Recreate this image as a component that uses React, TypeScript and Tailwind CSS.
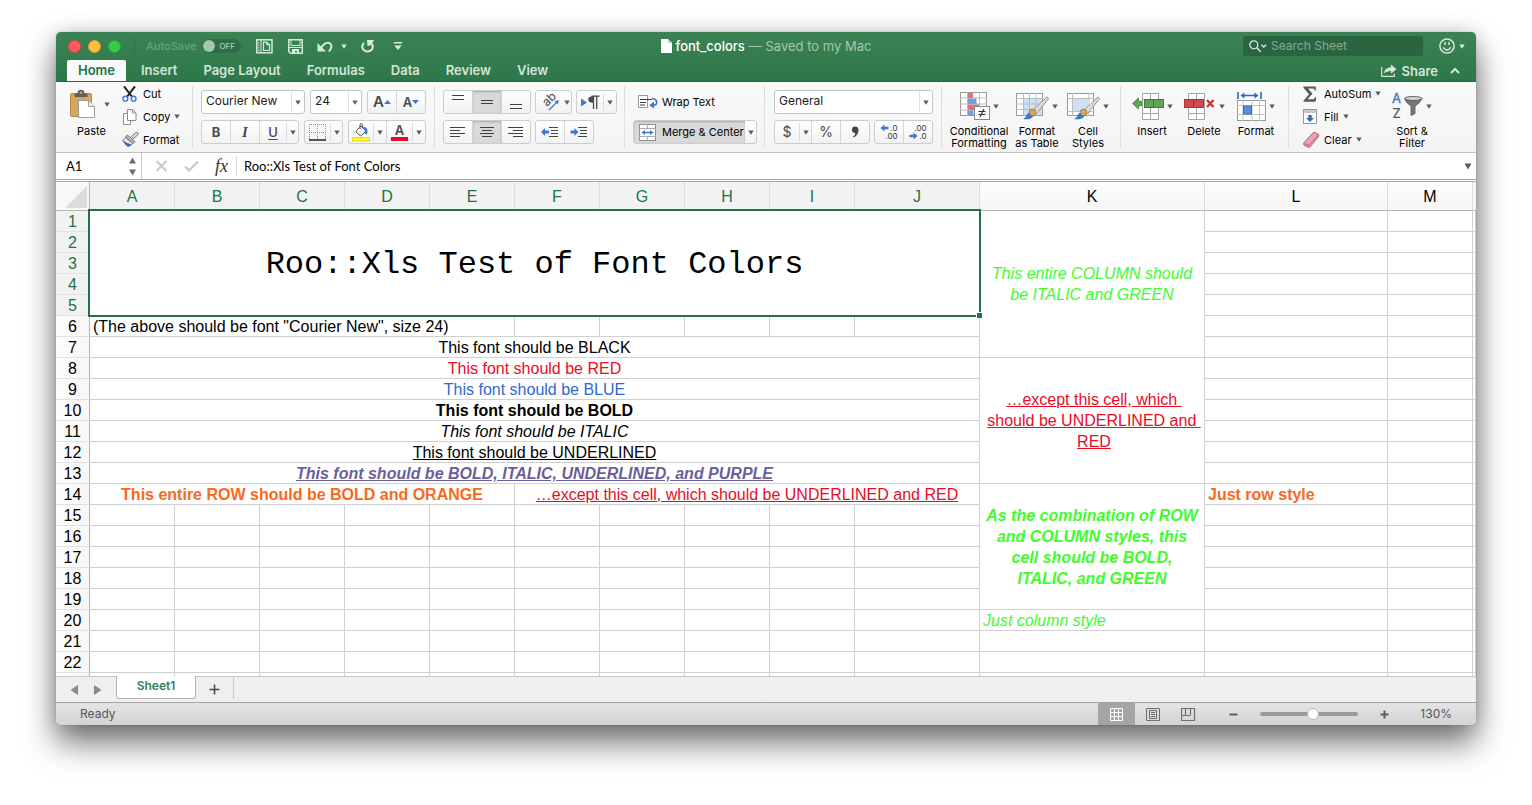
import React, { type ReactNode } from "react";

type Kids = { children?: ReactNode };

/* ---------- small shared pieces ---------- */

function Caret({ className = "text-[#5c5c5c]" }: { className?: string }) {
  return (
    <svg width="6" height="5" viewBox="0 0 6 5" className={"shrink-0 " + className} aria-hidden="true">
      <path d="M0.3 0.4h5.4L3 4.8z" fill="currentColor" />
    </svg>
  );
}

function Group({ children, className = "" }: Kids & { className?: string }) {
  return <div className={"flex shrink-0 border-r border-[#dfdfdf] h-[62px] " + className}>{children}</div>;
}

function Box({ children, className = "" }: Kids & { className?: string }) {
  return (
    <div
      className={
        "flex h-6 overflow-hidden rounded-[3px] border border-[#cdcdcd] bg-linear-to-b from-white to-[#f2f2f2] " + className
      }
    >
      {children}
    </div>
  );
}

function Tool({ label, children, className = "w-7", on = false }: Kids & { label: string; className?: string; on?: boolean }) {
  return (
    <button
      type="button"
      aria-label={label}
      className={
        "flex h-full shrink-0 items-center justify-center text-[#4a4a4a] " + (on ? "bg-[#d9d9d9] shadow-[inset_0_1px_2px_#a8a8a8] " : "") + className
      }
    >
      {children}
    </button>
  );
}

const Line = () => <span className="h-full w-px shrink-0 bg-[#d6d6d6]" />;
const Inner = () => <span className="my-[2px] w-px shrink-0 bg-[#dcdcdc]" />;

function Combo({ label, value, className }: { label: string; value: string; className: string }) {
  return (
    <div className={"relative h-6 " + className}>
      <select
        aria-label={label}
        defaultValue={value}
        className="block h-6 w-full appearance-none rounded-[3px] border border-[#c4c4c4] bg-white pb-[2px] pl-1 font-['Inter',sans-serif] text-[12px] leading-4 text-[#1c1c1c]"
      >
        <option>{value}</option>
      </select>
      <span className="pointer-events-none absolute inset-y-[2px] right-1 flex items-center border-l border-[#e0e0e0] pl-[3px]">
        <Caret />
      </span>
    </div>
  );
}

function Lines({ rows }: { rows: [number, number, number][] }) {
  return (
    <svg width="16" height="16" viewBox="0 0 16 16" aria-hidden="true">
      {rows.map(([x, y, w]) => (
        <rect key={y} x={x} y={y} width={w} height="1" fill="#3f3f3f" />
      ))}
    </svg>
  );
}

function BigTool({ icon, lines, className }: { icon: ReactNode; lines: string[]; className: string }) {
  return (
    <button type="button" className={"flex shrink-0 flex-col items-center pt-[6px] text-[11px] leading-3 text-black " + className}>
      <span className="mb-[5px] flex h-7 items-center gap-[3px]">
        {icon}
        <Caret />
      </span>
      {lines.map((l) => (
        <span key={l} className="whitespace-nowrap">
          {l}
        </span>
      ))}
    </button>
  );
}

function SmallTool({ icon, text, caret = false }: { icon: ReactNode; text: string; caret?: boolean }) {
  return (
    <button type="button" className="flex h-[23px] shrink-0 items-center text-[11px] leading-4 text-black">
      <span className="flex w-[21px] shrink-0 items-center">{icon}</span>
      <span className="mr-1 whitespace-nowrap">{text}</span>
      {caret && <Caret />}
    </button>
  );
}

/* ---------- ribbon icons ---------- */

const PasteIcon = () => (
  <svg width="26" height="30" viewBox="0 0 26 30" aria-hidden="true">
    <rect x="0.500" y="4.500" width="21" height="23" rx="1.500" fill="#d9a556" stroke="#b98842" />
    <path d="M4.500 8V5.500q0-1.300 1.300-1.300H7.500q0-3.400 3.500-3.400t3.500 3.400h1.700q1.300 0 1.300 1.300V8z" fill="#5d6065" />
    <circle cx="11" cy="3.800" r="1.300" fill="#d9a556" />
    <path d="M8.500 11.500h10l6 6v11h-16z" fill="#fff" stroke="#9c9c9c" />
    <path d="M18.500 11.500v6h6" fill="#eee" stroke="#9c9c9c" />
  </svg>
);

const CutIcon = () => (
  <svg width="15" height="16" viewBox="0 0 15 16" aria-hidden="true">
    <path d="M2 0.300L9.800 10.500M13 0.300L5.200 10.500" stroke="#222" strokeWidth="2" />
    <circle cx="3.400" cy="12.700" r="2.400" fill="none" stroke="#3c78d0" strokeWidth="1.400" />
    <circle cx="11.600" cy="12.700" r="2.400" fill="none" stroke="#3c78d0" strokeWidth="1.400" />
  </svg>
);

const CopyIcon = () => (
  <svg width="15" height="16" viewBox="0 0 15 16" aria-hidden="true">
    <path d="M1.500 4.500h7v11h-7z" fill="#fff" stroke="#8c8c8c" />
    <path d="M5.500 0.500h5l3.500 3.500v7.500h-8.500z" fill="#fff" stroke="#8c8c8c" />
    <path d="M10.500 0.500v3.500h3.500" fill="none" stroke="#8c8c8c" />
  </svg>
);

const PainterIcon = () => (
  <svg width="17" height="15" viewBox="0 0 17 15" aria-hidden="true">
    <path d="M9.500 4.500L13.500 0.800Q15 0 15.800 1T15.600 3L11.500 6.500z" fill="#ddd" stroke="#666" strokeWidth="0.900" />
    <path d="M5.500 3L13 9.500L11 11.500L3.500 5z" fill="#b9b9b9" stroke="#666" strokeWidth="0.900" />
    <path d="M3.500 5.500L10.700 11.700Q9 14 6 14.500Q2.500 12 0.500 8.200Q2.500 7.800 3.500 5.500z" fill="#e4e4e4" stroke="#777" strokeWidth="0.800" />
    <path d="M0.800 8.500Q4 11 9.600 12.600Q8 14.500 5.700 14.500Q2.500 12.500 0.800 8.500z" fill="#2f68bb" />
  </svg>
);

const BorderIcon = () => (
  <svg width="18" height="17" viewBox="0 0 18 17" aria-hidden="true">
    <path d="M0.500 0v15M8.500 0v15M16.500 0v15M0 0.500h17M0 8.500h17" stroke="#8b8b8b" strokeDasharray="1 1" fill="none" />
    <path d="M0 16h17" stroke="#222" strokeWidth="1.400" />
  </svg>
);

const FillColorIcon = () => (
  <svg width="19" height="19" viewBox="0 0 19 19" aria-hidden="true">
    <path d="M4.500 7.500L9 3l5 5-4.500 4.500q-0.700 0.700-1.400 0L4 9z" fill="#f4f4f4" stroke="#555" />
    <path d="M8 6V2q0-1.500 1.200-1.500T10.400 2v3" fill="none" stroke="#555" />
    <path d="M11 3.500q4.500 0.500 4.500 5 0 3-1.800 2.700T13.200 8z" fill="#3c78d0" />
    <rect x="0.500" y="14.500" width="17" height="3.500" fill="#ffff22" stroke="#dede26" />
  </svg>
);

const WrapIcon = () => (
  <svg width="20" height="14" viewBox="0 0 20 14" aria-hidden="true">
    <path d="M9.500 0.500h-9v12h9z" fill="#fff" stroke="#999" />
    <path d="M2 4.500h12M2 7.500h6M2 10h5" stroke="#3e3e3e" fill="none" />
    <path d="M14 3.500q4.700 0.300 4.700 4 0 2.600-3.200 2.800" fill="none" stroke="#3c78d0" strokeWidth="1.600" />
    <path d="M11.300 10.200L16 6.600v7z" fill="#3c78d0" />
  </svg>
);

const MergeIcon = () => (
  <svg width="17" height="17" viewBox="0 0 17 17" aria-hidden="true">
    <rect x="0.500" y="0.500" width="16" height="16" fill="#fff" stroke="#8f8f8f" />
    <path d="M0 4.500h17M0 12.500h17M8.500 0v4M8.500 13v4" stroke="#aaa" />
    <path d="M4 8.500h9" stroke="#3c78d0" strokeWidth="1.300" />
    <path d="M2.500 8.500L6 5.900v5.200zM14.500 8.500L11 5.900v5.200z" fill="#3c78d0" />
  </svg>
);

const IndentIcon = ({ right = false }: { right?: boolean }) => (
  <svg width="18" height="12" viewBox="0 0 18 12" aria-hidden="true">
    <path d="M8 1.500h9M10 4.500h7M10 7.500h7M8 10.500h9" stroke="#444" />
    <path d={right ? "M8.500 6L4.500 2v2.400H0.500v3.200h4V10z" : "M0 6l4-4v2.400h4v3.200H4V10z"} fill="#3c78d0" />
  </svg>
);

const OrientIcon = () => (
  <svg width="18" height="17" viewBox="0 0 18 17" className="overflow-visible" aria-hidden="true">
    <text x="0" y="0" transform="translate(5 13) rotate(-45)" fontSize="12" fill="#444" fontFamily="Inter, sans-serif">
      ab
    </text>
    <path d="M7 16L14.500 8.500" stroke="#3c78d0" strokeWidth="1.300" />
    <path d="M17 6l-1.200 4.600-3.400-3.400z" fill="#3c78d0" />
  </svg>
);

const ParagraphIcon = () => (
  <svg width="19" height="15" viewBox="0 0 19 15" aria-hidden="true">
    <path d="M0 3.500l6 4-6 4z" fill="#3c78d0" />
    <path d="M12 1.300Q7.300 1.300 7.300 4.500T12 7.800z" fill="#4a4a4a" />
    <path d="M12.500 1v13M15.700 1v13M10.500 1.200h8" stroke="#4a4a4a" strokeWidth="1.300" fill="none" />
  </svg>
);

const DecimalIcon = ({ more = false }: { more?: boolean }) => (
  <svg width="18" height="17" viewBox="0 0 18 17" aria-hidden="true" fontFamily="Inter, sans-serif" fontSize="8" fill="#333">
    <text x="17.500" y="7" textAnchor="end">{more ? ".0" : ".00"}</text>
    <text x="17.500" y="15" textAnchor="end">{more ? ".00" : ".0"}</text>
    {more ? (
      <path d="M0.500 4l4-3.500v2.200h4v2.600h-4v2.200z" fill="#3c78d0" />
    ) : (
      <path d="M8.500 12l-4-3.500v2.200h-4v2.600h4v2.200z" fill="#3c78d0" />
    )}
  </svg>
);

const ConditionalIcon = () => (
  <svg width="30" height="28" viewBox="0 0 30 28" aria-hidden="true">
    <rect x="0.500" y="0.500" width="26" height="23" fill="#fff" stroke="#999" />
    <path d="M0 6h27M0 12h27M0 18h27M7.500 0v24M19.500 0v24" stroke="#bbb" />
    <rect x="8" y="1" width="5" height="5" fill="#df7373" />
    <rect x="8" y="6.500" width="8.500" height="5.500" fill="#6e9fe0" />
    <rect x="8" y="12.500" width="11" height="5.500" fill="#df7373" />
    <rect x="8" y="18.500" width="5.500" height="5" fill="#6e9fe0" />
    <rect x="14.500" y="14.500" width="15" height="13" fill="#fff" stroke="#888" />
    <path d="M18.500 19.500h7M18.500 22.500h7M24 17l-4 8" stroke="#333" strokeWidth="1.200" />
  </svg>
);

const Brush = () => (
  <g>
    <path d="M30.200 5.500Q31.500 4.800 32.200 6T31.500 8L20.500 21.500l-3.500-3z" fill="#ededed" stroke="#808080" strokeWidth="0.900" />
    <path d="M31 6.500L19 20" stroke="#bdbdbd" />
    <circle cx="16.500" cy="20.500" r="3.400" fill="#dba653" stroke="#9c7238" strokeWidth="0.800" />
    <path d="M13.500 20.800q0.800 3 4 3.400-3 4-10.200 2.800 2.800-1.200 3.200-3.700 0.600-2.300 3-2.500z" fill="#3f78cf" />
  </g>
);

const FormatTableIcon = () => (
  <svg width="33" height="28" viewBox="0 0 33 28" aria-hidden="true">
    <rect x="0.500" y="1.500" width="26" height="22" fill="#fff" stroke="#999" />
    <rect x="8" y="7" width="18" height="16" fill="#cfe0f6" />
    <path d="M0 6.500h27M0 12h27M0 17.500h27M7.500 1v23M13.500 1v23M20 1v23" stroke="#b6bcc6" />
    <Brush />
  </svg>
);

const CellStylesIcon = () => (
  <svg width="33" height="28" viewBox="0 0 33 28" aria-hidden="true">
    <rect x="0.500" y="1.500" width="26" height="22" fill="#fff" stroke="#999" />
    <path d="M0 6.500h27M0 19.500h27M5.500 1v23M22 1v23" stroke="#bbb" />
    <rect x="6" y="7" width="15.500" height="12" fill="#cfe0f6" />
    <Brush />
  </svg>
);

const InsertIcon = () => (
  <svg width="32" height="27" viewBox="0 0 32 27" aria-hidden="true">
    <path d="M10.500 0.500h16v26h-16zM10 6.500h17M10 20.500h17M18.500 0v27" fill="#fff" stroke="#a5a5a5" />
    <rect x="12.500" y="6.500" width="19" height="8" fill="#62a457" stroke="#3f7e36" />
    <path d="M21.500 7v7" stroke="#3f7e36" />
    <path d="M0.500 10.500l6-5.500v3.300h3v4.400h-3V16z" fill="#62a457" stroke="#3f7e36" strokeWidth="0.800" />
  </svg>
);

const DeleteIcon = () => (
  <svg width="32" height="27" viewBox="0 0 32 27" aria-hidden="true">
    <path d="M4.500 0.500h16v26h-16zM4 6.500h17M4 20.500h17M12.500 0v27" fill="#fff" stroke="#a5a5a5" />
    <rect x="0.500" y="6.500" width="19" height="8" fill="#cf4a4e" stroke="#a3363a" />
    <path d="M9.500 7v7" stroke="#a3363a" />
    <path d="M23 7l6.500 7M29.500 7L23 14" stroke="#c03a3e" strokeWidth="2.400" />
  </svg>
);

const FormatCellsIcon = () => (
  <svg width="29" height="29" viewBox="0 0 29 29" aria-hidden="true">
    <rect x="0.500" y="8.500" width="28" height="20" fill="#fff" stroke="#999" />
    <path d="M0 13.500h29M0 22.500h29M6 8v21M15 8v21M22.500 8v21" stroke="#c2c2c2" />
    <rect x="6.500" y="14" width="8" height="8" fill="#5b8fdc" stroke="#3668b4" />
    <path d="M1 0v7M24 0v7M6 3.500h13" stroke="#2f68bb" strokeWidth="1.600" />
    <path d="M3.500 3.500l4-3v6zM21.500 3.500l-4-3v6z" fill="#2f68bb" />
  </svg>
);

const SumIcon = () => (
  <svg width="14" height="16" viewBox="0 0 14 16" aria-hidden="true">
    <path d="M0.500 0.500h12.300v4h-1q-0.300-2-2-2H5l4.500 5.300L4.500 13.300h5.300q1.700 0 2.200-2h1.200l-0.600 4.400H0.500v-1L6 8.300 0.500 1.800z" fill="#5a5a5a" />
  </svg>
);

const FillIcon = () => (
  <svg width="14" height="15" viewBox="0 0 14 15" aria-hidden="true">
    <rect x="0.500" y="0.500" width="13" height="14" fill="#fff" stroke="#999" />
    <rect x="1" y="1" width="12" height="3" fill="#c9c9c9" />
    <path d="M7 13L3 9h2.300V6h3.400v3H11z" fill="#3668b4" />
  </svg>
);

const EraserIcon = () => (
  <svg width="17" height="16" viewBox="0 0 17 16" aria-hidden="true">
    <path d="M1 10.500L10 1q1-0.800 2.200-0.300l3 1.500q1 0.800 0.400 2L7.500 14.500q-0.900 1-2.300 0.600L1.500 13.500Q0 12.500 1 10.500z" fill="#ef9fb4" stroke="#a8506b" strokeWidth="0.900" />
    <path d="M1 10.800l5.300 2q0.900 0.700 0 2.400L1.500 13.500Q0 12.500 1 10.800z" fill="#d9758f" />
    <path d="M6.300 12.800L15.600 3" stroke="#b9607a" strokeWidth="0.900" />
  </svg>
);

const SortIcon = () => (
  <svg width="31" height="27" viewBox="0 0 31 27" className="overflow-visible" aria-hidden="true" fontFamily="Inter, sans-serif" fontSize="13">
    <text x="0" y="10" fill="#3c78d0" stroke="#3c78d0" strokeWidth="0.400">A</text>
    <text x="0.500" y="25" fill="#555" stroke="#555" strokeWidth="0.200">Z</text>
    <path d="M12.500 5.500Q14 10 19 13v9.500l4-2V13Q28 10 30 5.500z" fill="#777" stroke="#555" strokeWidth="0.800" />
    <ellipse cx="21.300" cy="5.500" rx="8.700" ry="2" fill="#d2d2d2" stroke="#555" strokeWidth="0.900" />
  </svg>
);

/* ---------- title bar ---------- */

function TitleBar() {
  const btn = "flex items-center justify-center text-[#d9e9de]";
  return (
    <div className="grid h-7 grid-cols-[1fr_auto_1fr] items-center">
      <div className="flex items-center pl-3">
        <div className="flex gap-[7px]">
          <button type="button" aria-label="Close" className="size-[13px] rounded-full border border-[#d8434a] bg-[#fc5b5e]" />
          <button type="button" aria-label="Minimize" className="size-[13px] rounded-full border border-[#dba02f] bg-[#fdbe40]" />
          <button type="button" aria-label="Zoom" className="size-[13px] rounded-full border border-[#25a732] bg-[#35cc4b]" />
        </div>
        <span className="ml-[13px] h-4 w-px bg-[#32714a]" />
        <label htmlFor="autosave" className="ml-[11px] text-[11px] leading-4 font-medium text-[#69a37e]">
          AutoSave
        </label>
        <button
          id="autosave"
          type="button"
          role="switch"
          aria-checked="false"
          className="ml-[6px] flex h-[14px] w-[39px] items-center gap-1 rounded-full bg-[#2f6c47] text-[8px] leading-3 font-medium text-[#b5cfbf]"
        >
          <span className="ml-px size-3 rounded-full bg-[#a3c7b0]" />
          OFF
        </button>
        <button type="button" aria-label="New from template" className={"ml-[15px] " + btn}>
          <svg width="17" height="15" viewBox="0 0 17 15">
            <rect x="0.800" y="0.800" width="15.200" height="13" fill="none" stroke="currentColor" strokeWidth="1.500" />
            <path d="M5 1v13" stroke="currentColor" />
            <path d="M2.800 3v9" stroke="currentColor" strokeDasharray="1.500 1" />
            <path d="M7.500 3.200h3L13.500 6v5.500h-6z" fill="none" stroke="currentColor" strokeWidth="1.200" />
            <path d="M10.300 3v3.300h3.500z" fill="currentColor" />
          </svg>
        </button>
        <button type="button" aria-label="Save" className={"ml-[15px] " + btn}>
          <svg width="15" height="15" viewBox="0 0 15 15">
            <path d="M0.800 0.800h13.400v13.400H2.500L0.800 12.500z" fill="none" stroke="currentColor" strokeWidth="1.500" />
            <path d="M3 1v5.500h9V1M1 8.500h13" fill="none" stroke="currentColor" strokeWidth="1" />
            <path d="M4 14V10h7V14H9v-2H7v2z" fill="currentColor" />
          </svg>
        </button>
        <button type="button" aria-label="Undo" className={"ml-[14px] gap-2 " + btn}>
          <svg width="16" height="13" viewBox="0 0 16 13">
            <path d="M0.500 3v8.500H9z" fill="currentColor" />
            <path d="M3.500 8.500Q8.500 1.200 12.700 3.200 16.500 6 12 11.500" fill="none" stroke="currentColor" strokeWidth="2" />
          </svg>
          <Caret className="text-[#d9e9de]" />
        </button>
        <button type="button" aria-label="Repeat" className={"ml-[14px] " + btn}>
          <svg width="14" height="14" viewBox="0 0 14 14">
            <path d="M3 3.800Q-0.500 8 3 11.200 7 14 10.700 10.800 13 7.500 10.500 4.500" fill="none" stroke="currentColor" strokeWidth="2" />
            <path d="M6 1h7L12.300 2.500 9 6.500 6.500 7z" fill="currentColor" />
          </svg>
        </button>
        <button type="button" aria-label="Customize toolbar" className={"ml-[19px] " + btn}>
          <svg width="8" height="9" viewBox="0 0 8 9">
            <path d="M0 0.700h8" stroke="currentColor" strokeWidth="1.400" />
            <path d="M0.300 3.500h7.400L4 8z" fill="currentColor" />
          </svg>
        </button>
      </div>
      <div className="flex items-center text-[13px] leading-4 text-[#a3c7b0]">
        <svg width="11" height="14" viewBox="0 0 11 14" className="mr-1" aria-hidden="true">
          <path d="M0 0h7l4 4v10H0z" fill="#fff" />
          <path d="M7 0v4h4z" fill="#bcd3c4" />
        </svg>
        <h1 className="font-medium text-white">font_colors</h1>
        <span className="ml-1 whitespace-nowrap">— Saved to my Mac</span>
      </div>
      <div className="flex items-center justify-end pr-[11px]">
        <label className="flex h-5 w-[180px] items-center rounded-[3px] bg-[#2a6441] pl-[6px] text-[#d9e9de]">
          <svg width="18" height="13" viewBox="0 0 18 13" className="shrink-0" aria-hidden="true">
            <circle cx="4.800" cy="4.800" r="4" fill="none" stroke="currentColor" strokeWidth="1.300" />
            <path d="M7.700 7.700l4 4" stroke="currentColor" strokeWidth="1.500" />
            <path d="M12.500 4.800l2.200 2.200 2.300-2.200" fill="none" stroke="currentColor" strokeWidth="1.400" />
          </svg>
          <input
            type="text"
            aria-label="Search Sheet"
            placeholder="Search Sheet"
            className="ml-1 w-full min-w-0 bg-transparent text-[12px] leading-4 outline-none placeholder:text-[#85ac93] placeholder:opacity-100"
          />
        </label>
        <button type="button" aria-label="Feedback" className={"ml-4 gap-1 " + btn}>
          <svg width="16" height="16" viewBox="0 0 16 16">
            <circle cx="8" cy="8" r="7.100" fill="none" stroke="currentColor" strokeWidth="1.500" />
            <path d="M6 4v3M10 4v3" stroke="currentColor" strokeWidth="1.500" />
            <path d="M4.300 9.300Q5.500 12 8 12t3.700-2.700" fill="none" stroke="currentColor" strokeWidth="1.400" />
          </svg>
          <Caret className="text-[#d9e9de]" />
        </button>
      </div>
    </div>
  );
}

function RibbonTabs() {
  const tabs = ["Insert", "Page Layout", "Formulas", "Data", "Review", "View"];
  return (
    <div className="flex h-[21px] items-end pl-[11px] text-[13px] leading-[21px] font-semibold text-[#d3e6da]">
      <nav className="flex">
        <a href="#home" className="mr-[2px] flex w-[59px] justify-center rounded-t-[2px] bg-[#f9f9f9] text-[#217346]">
          Home
        </a>
        {tabs.map((t) => (
          <a key={t} href={"#" + t.toLowerCase().replace(" ", "-")} className="px-[13px] whitespace-nowrap">
            {t}
          </a>
        ))}
      </nav>
      <div className="ml-auto flex h-full items-center gap-3 pr-4">
        <button type="button" className="flex items-center gap-[5px] leading-4">
          <svg width="16" height="13" viewBox="0 0 16 13" aria-hidden="true">
            <path d="M0.700 3v9.300h12.600V9.500" fill="none" stroke="currentColor" strokeWidth="1.200" />
            <path d="M3 9.500Q3.500 3.500 10 3.300V0.500l5.500 4.700L10 9.700V7Q6 6.700 3 9.500z" fill="currentColor" />
          </svg>
          Share
        </button>
        <button type="button" aria-label="Collapse ribbon">
          <svg width="10" height="7" viewBox="0 0 10 7">
            <path d="M1 6l4-4 4 4" fill="none" stroke="currentColor" strokeWidth="2" />
          </svg>
        </button>
      </div>
    </div>
  );
}

/* ---------- ribbon ---------- */

function Ribbon() {
  return (
    <div className="flex h-[71px] items-start border-b border-[#c2c2c2] bg-linear-to-b from-[#f9f9f9] to-[#f4f4f4] pt-1">
      <Group className="w-[137px]">
        <button type="button" className="ml-[14px] flex w-10 flex-col pt-[3px] text-[11px] leading-3 text-black">
          <span className="mb-[6px] flex items-center gap-2">
            <PasteIcon />
            <Caret />
          </span>
          <span className="ml-[3px]">Paste</span>
        </button>
        <div className="-mt-1 ml-3 flex flex-col">
          <SmallTool icon={<CutIcon />} text="Cut" />
          <SmallTool icon={<CopyIcon />} text="Copy" caret />
          <SmallTool icon={<PainterIcon />} text="Format" />
        </div>
      </Group>

      <Group className="w-[242px] flex-col gap-[6px] pt-1 pl-2">
        <div className="flex gap-[5px]">
          <Combo label="Font" value="Courier New" className="w-[104px]" />
          <Combo label="Font size" value="24" className="w-[52px]" />
          <Box>
            <Tool label="Increase font size">
              <span className="text-[15px] leading-4 font-semibold">A</span>
              <svg width="7" height="4" viewBox="0 0 7 4"><path d="M0 4l3.500-4L7 4z" fill="#3c78d0" /></svg>
            </Tool>
            <Line />
            <Tool label="Decrease font size">
              <span className="text-[13px] leading-4 font-semibold">A</span>
              <svg width="7" height="4" viewBox="0 0 7 4"><path d="M0 0l3.500 4L7 0z" fill="#3c78d0" /></svg>
            </Tool>
          </Box>
        </div>
        <div className="flex gap-[5px]">
          <Box>
            <Tool label="Bold"><b className="text-[13px] leading-4">B</b></Tool>
            <Line />
            <Tool label="Italic"><i className="font-['Liberation_Serif',serif] text-[15px] leading-4 font-bold">I</i></Tool>
            <Line />
            <Tool label="Underline" className="w-[26px]"><u className="text-[13px] leading-4 font-medium underline-offset-2">U</u></Tool>
            <Inner />
            <Tool label="Underline style" className="w-[11px]"><Caret /></Tool>
          </Box>
          <Box>
            <Tool label="Borders" className="w-[25px]"><BorderIcon /></Tool>
            <Inner />
            <Tool label="Border style" className="w-[11px]"><Caret /></Tool>
          </Box>
          <Box>
            <Tool label="Fill color" className="w-6"><FillColorIcon /></Tool>
            <Inner />
            <Tool label="Fill color options" className="w-3"><Caret /></Tool>
            <Line />
            <Tool label="Font color" className="w-[25px] flex-col">
              <span className="text-[13px] leading-[14px] font-semibold">A</span>
              <span className="h-1 w-[17px] bg-[#f0081d]" />
            </Tool>
            <Inner />
            <Tool label="Font color options" className="w-3"><Caret /></Tool>
          </Box>
        </div>
      </Group>

      <Group className="w-[190px] flex-col gap-[6px] pt-1 pl-2">
        <div className="flex gap-1">
          <Box>
            <Tool label="Align top"><Lines rows={[[2, 1, 12], [2, 5, 12]]} /></Tool>
            <Line />
            <Tool label="Align middle" on><Lines rows={[[2, 6, 12], [2, 9, 12]]} /></Tool>
            <Line />
            <Tool label="Align bottom"><Lines rows={[[2, 10, 12], [2, 14, 12]]} /></Tool>
          </Box>
          <Box>
            <Tool label="Orientation" className="w-[35px] gap-1 pl-1"><OrientIcon /><Caret /></Tool>
          </Box>
          <Box>
            <Tool label="Text direction" className="w-[26px]"><ParagraphIcon /></Tool>
            <Inner />
            <Tool label="Text direction options" className="w-3"><Caret /></Tool>
          </Box>
        </div>
        <div className="flex gap-1">
          <Box>
            <Tool label="Align left"><Lines rows={[[0, 3, 15], [0, 6, 10], [0, 9, 15], [0, 12, 10]]} /></Tool>
            <Line />
            <Tool label="Center" on><Lines rows={[[1, 3, 14], [3, 6, 10], [1, 9, 14], [3, 12, 10]]} /></Tool>
            <Line />
            <Tool label="Align right"><Lines rows={[[0, 3, 15], [5, 6, 10], [0, 9, 15], [5, 12, 10]]} /></Tool>
          </Box>
          <Box>
            <Tool label="Decrease indent"><IndentIcon /></Tool>
            <Line />
            <Tool label="Increase indent"><IndentIcon right /></Tool>
          </Box>
        </div>
      </Group>

      <Group className="w-[140px] flex-col gap-[6px] pt-1 pl-2">
        <button type="button" className="flex h-6 items-center gap-1 pl-[5px] text-[11px] leading-4 text-black">
          <WrapIcon />
          Wrap Text
        </button>
        <Box className="w-[124px]">
          <button
            type="button"
            className="flex h-full w-[111px] items-center gap-[6px] bg-[#d9d9d9] pl-[5px] text-[11px] leading-4 whitespace-nowrap text-black shadow-[inset_0_1px_2px_#a8a8a8]"
          >
            <MergeIcon />
            Merge &amp; Center
          </button>
          <Tool label="Merge options" className="w-[11px]"><Caret /></Tool>
        </Box>
      </Group>

      <Group className="w-[177px] flex-col gap-[6px] pt-1 pl-[9px]">
        <Combo label="Number format" value="General" className="w-[159px]" />
        <div className="flex gap-1">
          <Box>
            <Tool label="Currency" className="w-6"><span className="text-[14px] leading-4">$</span></Tool>
            <Inner />
            <Tool label="Currency options" className="w-[11px]"><Caret /></Tool>
            <Line />
            <Tool label="Percent"><span className="text-[14px] leading-4">%</span></Tool>
            <Line />
            <Tool label="Comma">
              <svg width="8" height="12" viewBox="0 0 8 12"><path d="M4 0.500q3.500 0.200 3.500 4Q7.300 9 2.500 11.500L2 10.800Q4.300 9 4.400 7 1 7 1 3.800 1.200 0.600 4 0.500z" fill="#444" /></svg>
            </Tool>
          </Box>
          <Box>
            <Tool label="Increase decimal"><DecimalIcon more /></Tool>
            <Line />
            <Tool label="Decrease decimal"><DecimalIcon /></Tool>
          </Box>
        </div>
      </Group>

      <Group className="w-[179px] gap-2 pl-2">
        <BigTool icon={<ConditionalIcon />} lines={["Conditional", "Formatting"]} className="w-[58px]" />
        <BigTool icon={<FormatTableIcon />} lines={["Format", "as Table"]} className="w-[42px]" />
        <BigTool icon={<CellStylesIcon />} lines={["Cell", "Styles"]} className="w-11" />
      </Group>

      <Group className="w-[168px] gap-2 pl-2">
        <BigTool icon={<InsertIcon />} lines={["Insert"]} className="w-[46px]" />
        <BigTool icon={<DeleteIcon />} lines={["Delete"]} className="w-[42px]" />
        <BigTool icon={<FormatCellsIcon />} lines={["Format"]} className="w-[46px]" />
      </Group>

      <div className="-mt-1 ml-[14px] flex w-[82px] shrink-0 flex-col">
        <SmallTool icon={<SumIcon />} text="AutoSum" caret />
        <SmallTool icon={<FillIcon />} text="Fill" caret />
        <SmallTool icon={<EraserIcon />} text="Clear" caret />
      </div>
      <BigTool icon={<SortIcon />} lines={["Sort &", "Filter"]} className="ml-1 w-[46px]" />
    </div>
  );
}

function FormulaBar() {
  return (
    <div className="flex h-[29px] items-center border-b-[3px] border-double border-[#a8a8a8] bg-white">
      <div className="flex h-full w-[86px] items-center border-r border-[#c6c6c6]">
        <input
          type="text"
          aria-label="Name box"
          defaultValue="A1"
          className="w-[73px] pl-[10px] font-['Lato',sans-serif] text-[13px] leading-4 text-black outline-none"
        />
        <svg width="7" height="19" viewBox="0 0 7 19" aria-hidden="true">
          <path d="M0 6.500h7L3.500 0.500zM0 12.500h7l-3.500 6z" fill="#6c6c6c" />
        </svg>
      </div>
      <button type="button" aria-label="Cancel" className="ml-[13px]">
        <svg width="13" height="12" viewBox="0 0 13 12"><path d="M1.500 1l10 10M11.500 1l-10 10" stroke="#c9c9c9" strokeWidth="2" /></svg>
      </button>
      <button type="button" aria-label="Enter" className="ml-4">
        <svg width="15" height="12" viewBox="0 0 15 12"><path d="M1 6.500l4 4L14 1.500" fill="none" stroke="#c9c9c9" strokeWidth="2.200" /></svg>
      </button>
      <button type="button" aria-label="Insert function" className="ml-4 font-['Liberation_Serif',serif] text-[18px] leading-5 text-[#333] italic">
        fx
      </button>
      <span className="ml-2 h-5 w-px bg-[#d9d9d9]" />
      <input
        type="text"
        aria-label="Formula"
        defaultValue="Roo::Xls Test of Font Colors"
        className="min-w-0 flex-1 pl-[7px] font-['Lato',sans-serif] text-[13px] leading-4 text-black outline-none"
      />
      <button type="button" aria-label="Expand formula bar" className="pr-1">
        <svg width="8" height="7" viewBox="0 0 8 7"><path d="M0.500 0.500h7L4 6.500z" fill="#5c5c5c" /></svg>
      </button>
    </div>
  );
}

/* ---------- worksheet ---------- */

const columns = ["A", "B", "C", "D", "E", "F", "G", "H", "I", "J", "K", "L", "M"];

type Cell = { span?: number; rows?: number; body?: ReactNode; cls?: string };

const green = "text-[#42fb2c] italic";
const red = "text-[#ea0b25] underline";
const blank = (n: number): Cell[] => Array.from({ length: n }, () => ({}));
const wide = (body: string, cls: string): Cell => ({ span: 10, body, cls: "text-center " + cls });

const sheet: Record<number, Cell[]> = {
  1: [
    {
      span: 10,
      rows: 5,
      cls: "relative pt-1 text-center font-['Liberation_Mono','Courier_New',monospace] text-[32px] leading-9",
      body: (
        <>
          Roo::Xls Test of Font Colors
          <span className="pointer-events-none absolute -inset-[2px] z-10 border-2 border-[#217346]" />
          <span className="absolute -right-[3px] -bottom-[3px] z-20 size-[6px] border-t border-l border-white bg-[#217346]" />
        </>
      ),
    },
    { rows: 7, cls: "px-1 text-center leading-[21px] " + green, body: "This entire COLUMN should be ITALIC and GREEN" },
    ...blank(3),
  ],
  2: blank(3),
  3: blank(3),
  4: blank(3),
  5: blank(3),
  6: [{ span: 5, cls: "pl-[3px]", body: '(The above should be font "Courier New", size 24)' }, ...blank(8)],
  7: [wide("This font should be BLACK", ""), ...blank(3)],
  8: [
    wide("This font should be RED", "text-[#ea0b25]"),
    {
      rows: 6,
      cls: "pl-1 text-center leading-[21px] whitespace-nowrap " + red,
      body: (
        <>
          …except this cell, which&nbsp;
          <br />
          should be UNDERLINED and&nbsp;
          <br />
          RED
        </>
      ),
    },
    ...blank(3),
  ],
  9: [wide("This font should be BLUE", "text-[#2f69cf]"), ...blank(3)],
  10: [wide("This font should be BOLD", "font-bold"), ...blank(3)],
  11: [wide("This font should be ITALIC", "italic"), ...blank(3)],
  12: [wide("This font should be UNDERLINED", "underline"), ...blank(3)],
  13: [wide("This font should be BOLD, ITALIC, UNDERLINED, and PURPLE", "font-bold text-[#6a6099] italic underline"), ...blank(3)],
  14: [
    { span: 5, cls: "text-center font-bold text-[#f8691c]", body: "This entire ROW should be BOLD and ORANGE" },
    { span: 5, cls: "text-center " + red, body: "…except this cell, which should be UNDERLINED and RED" },
    {
      rows: 6,
      cls: "px-1 text-center leading-[21px] font-bold " + green,
      body: "As the combination of ROW and COLUMN styles, this cell should be BOLD, ITALIC, and GREEN",
    },
    { cls: "pl-[3px] font-bold text-[#f8691c]", body: "Just row style" },
    ...blank(2),
  ],
  20: [...blank(10), { cls: "pl-[3px] " + green, body: "Just column style" }, ...blank(3)],
  21: blank(14),
  22: blank(14),
  23: blank(14),
};

function Worksheet() {
  const rows = Array.from({ length: 23 }, (_, i) => i + 1);
  return (
    <div className="h-[494px] overflow-hidden bg-white">
      <table className="w-full table-fixed border-separate border-spacing-0 font-['Liberation_Sans',Arial,sans-serif] text-[16px] leading-[18px] text-black">
        <colgroup>
          <col className="w-[34px]" />
          {columns.map((c) => (
            <col key={c} className={c === "J" ? "w-[125px]" : c === "K" ? "w-[225px]" : c === "L" ? "w-[183px]" : "w-[85px]"} />
          ))}
          <col />
        </colgroup>
        <thead>
          <tr className="h-[29px]">
            <th className="border-r border-b border-[#b5b5b5] bg-[#f8f8f8] p-0 align-bottom">
              <svg width="22" height="22" viewBox="0 0 22 22" className="mb-[2px] ml-[9px]" aria-hidden="true">
                <path d="M22 0v22H0z" fill="#dcdcdc" />
              </svg>
            </th>
            {columns.map((c, i) => (
              <th
                key={c}
                scope="col"
                className={
                  "border-r border-b border-r-[#dddddd] border-b-[#b5b5b5] px-0 pt-[2px] pb-0 font-normal " +
                  (i < 10 ? "bg-[#f2f2f2] text-[#217346]" : "bg-linear-to-b from-[#fdfdfd] to-[#f6f6f6]")
                }
              >
                {c}
              </th>
            ))}
            <th className="border-b border-[#b5b5b5] bg-[#f8f8f8] p-0" />
          </tr>
        </thead>
        <tbody>
          {rows.map((r) => (
            <tr key={r} className="h-[21px]">
              <th
                scope="row"
                className={
                  "border-r border-b border-r-[#b5b5b5] border-b-[#e2e2e2] px-0 pt-[2px] pb-0 font-normal " +
                  (r < 6 ? "bg-[#f2f2f2] text-[#217346]" : "bg-linear-to-r from-[#fdfdfd] to-[#f7f7f7]")
                }
              >
                {r < 23 ? r : null}
              </th>
              {(sheet[r] ?? blank(r < 20 ? 13 : 14)).map((cell, i) => (
                <td
                  key={i}
                  colSpan={cell.span}
                  rowSpan={cell.rows}
                  className={"border-r border-b border-[#d0d0d0] " + (cell.rows ? "" : "pt-[2px] ") + (cell.cls ?? "")}
                >
                  {cell.body}
                </td>
              ))}
            </tr>
          ))}
        </tbody>
      </table>
    </div>
  );
}

function SheetTabs() {
  return (
    <div className="flex h-[26px] items-start border-t border-[#c8c8c8] bg-[#efefef]">
      <button type="button" aria-label="Previous sheet" className="mt-2 ml-[14px]">
        <svg width="8" height="10" viewBox="0 0 8 10" className="block"><path d="M8 0v10L0.500 5z" fill="#8a8a8a" /></svg>
      </button>
      <button type="button" aria-label="Next sheet" className="mt-2 ml-4">
        <svg width="8" height="10" viewBox="0 0 8 10" className="block"><path d="M0 0v10l7.500-5z" fill="#8a8a8a" /></svg>
      </button>
      <button
        type="button"
        className="-mt-px ml-[14px] h-[23px] w-20 rounded-b-[3px] border border-t-0 border-[#b4b4b4] bg-white pb-[2px] text-[12px] leading-5 font-semibold text-[#2f8550]"
      >
        Sheet1
      </button>
      <button type="button" aria-label="Add sheet" className="flex h-[22px] w-[38px] items-center justify-center border-r border-[#c8c8c8]">
        <svg width="11" height="11" viewBox="0 0 11 11" className="mt-[3px]"><path d="M5.500 0.500v10M0.500 5.500h10" stroke="#4a4a4a" strokeWidth="1.600" /></svg>
      </button>
    </div>
  );
}

function StatusBar() {
  return (
    <div className="flex h-[23px] items-center border-t border-[#a3a3a3] bg-linear-to-b from-[#e4e4e4] to-[#d3d3d3] text-[12px] leading-4 text-[#565656]">
      <span className="pl-6">Ready</span>
      <div className="ml-auto flex h-full items-center">
        <button type="button" aria-label="Normal view" className="flex h-full w-[37px] items-center justify-center bg-[#a5a5a5]">
          <svg width="13" height="13" viewBox="0 0 13 13">
            <path d="M0.500 0.500h12v12h-12zM4.500 0v13M8.500 0v13M0 4.500h13M0 8.500h13" fill="none" stroke="#fff" />
          </svg>
        </button>
        <button type="button" aria-label="Page layout view" className="ml-[11px]">
          <svg width="14" height="13" viewBox="0 0 14 13">
            <path d="M0.500 0.500h13v12h-13zM3.500 2.500h7v8h-7zM5 4.500h4M5 6.500h4M5 8.500h4" fill="none" stroke="#6e6e6e" />
          </svg>
        </button>
        <button type="button" aria-label="Page break view" className="ml-[21px]">
          <svg width="15" height="13" viewBox="0 0 15 13">
            <path d="M0.500 0.500h13v12h-13zM4.500 1v6M9.500 1v6M1 7.500h8.500" fill="none" stroke="#6e6e6e" strokeWidth="1.200" />
          </svg>
        </button>
        <button type="button" aria-label="Zoom out" className="ml-[33px]">
          <svg width="9" height="9" viewBox="0 0 9 9"><path d="M0.500 4.500h8" stroke="#5c5c5c" strokeWidth="2" /></svg>
        </button>
        <input
          type="range"
          aria-label="Zoom"
          min={0}
          max={100}
          defaultValue={55}
          className="ml-[22px] h-3 w-[98px] appearance-none bg-transparent [&::-webkit-slider-runnable-track]:h-1 [&::-webkit-slider-runnable-track]:rounded-full [&::-webkit-slider-runnable-track]:bg-[#9a9a9a] [&::-webkit-slider-thumb]:-mt-1 [&::-webkit-slider-thumb]:size-3 [&::-webkit-slider-thumb]:appearance-none [&::-webkit-slider-thumb]:rounded-full [&::-webkit-slider-thumb]:border [&::-webkit-slider-thumb]:border-[#b5b5b5] [&::-webkit-slider-thumb]:bg-white"
        />
        <button type="button" aria-label="Zoom in" className="ml-[22px]">
          <svg width="9" height="9" viewBox="0 0 9 9"><path d="M0.500 4.500h8M4.500 0.500v8" stroke="#5c5c5c" strokeWidth="2" /></svg>
        </button>
        <span className="w-[87px] pr-6 text-right">130%</span>
      </div>
    </div>
  );
}

export default function App() {
  return (
    <main className="min-h-screen bg-white px-14 py-8 font-['Inter',sans-serif]">
      <div className="overflow-hidden rounded-[5px] shadow-[0_0_1px_rgba(0,0,0,0.5),0_18px_32px_rgba(0,0,0,0.55),0_0_20px_rgba(0,0,0,0.15)]">
        <header className="border-b border-[#276440] bg-linear-to-b from-[#3b8354] to-[#2e774a]">
          <TitleBar />
          <RibbonTabs />
        </header>
        <Ribbon />
        <FormulaBar />
        <Worksheet />
        <SheetTabs />
        <StatusBar />
      </div>
    </main>
  );
}
